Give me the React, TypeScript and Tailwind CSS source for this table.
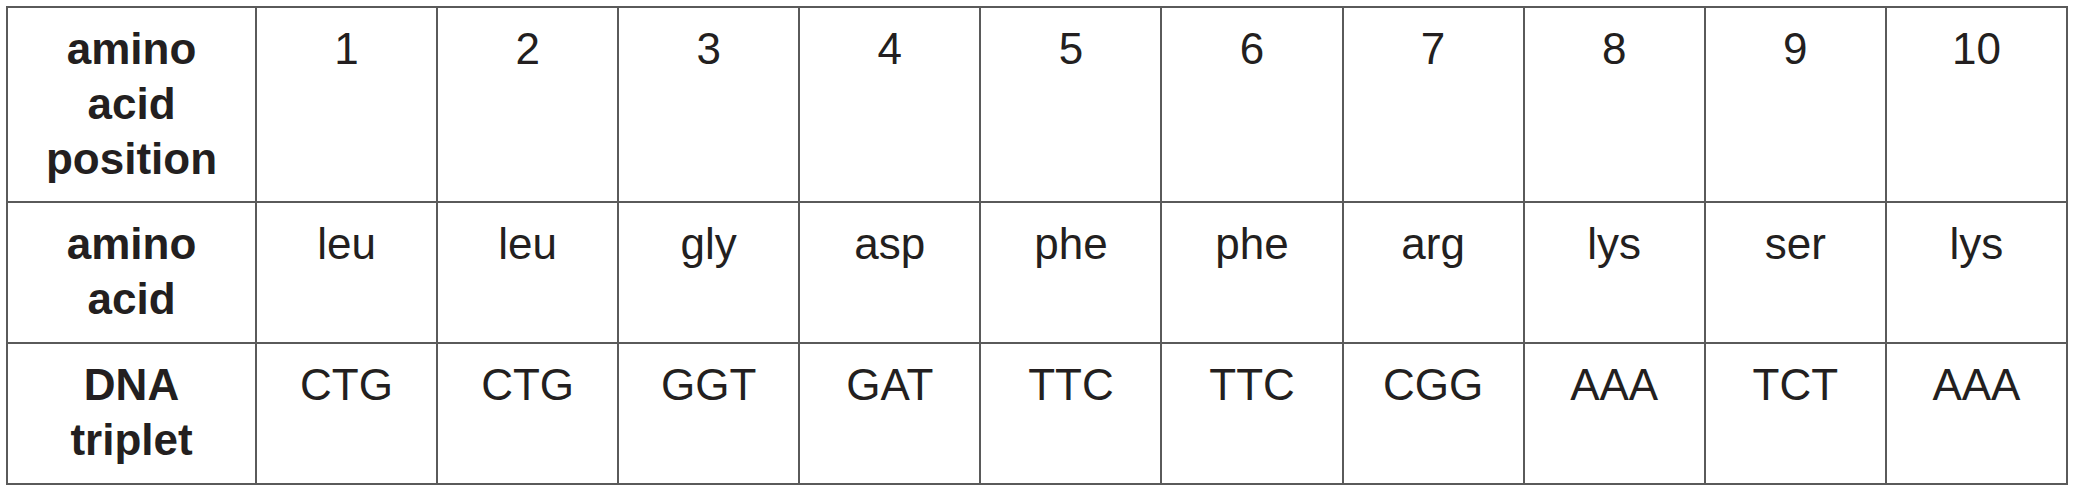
const positions = ["1", "2", "3", "4", "5", "6", "7", "8", "9", "10"];
const aminoAcids = ["leu", "leu", "gly", "asp", "phe", "phe", "arg", "lys", "ser", "lys"];
const triplets = ["CTG", "CTG", "GGT", "GAT", "TTC", "TTC", "CGG", "AAA", "TCT", "AAA"];

const rows = [
  { label: ["amino", "acid", "position"], cells: positions, height: "h-[195px]" },
  { label: ["amino", "acid"], cells: aminoAcids, height: "h-[141px]" },
  { label: ["DNA", "triplet"], cells: triplets, height: "h-[141px]" },
];

export default function App() {
  return (
    <div className="min-h-screen bg-white pl-[6px] pt-[6px] font-['Liberation_Sans',Arial,sans-serif] text-[#231f20]">
      <table className="w-[2062px] table-fixed border-collapse border-2 border-[#444]">
        <colgroup>
          <col className="w-[249px]" />
          {positions.map((p) => (
            <col key={p} />
          ))}
        </colgroup>
        <tbody>
          {rows.map((row, i) => (
            <tr key={i} className={row.height}>
              <th className="border-2 border-[#5a5a5a] pt-[13px] align-top text-[44px] leading-[55px] font-bold">
                {row.label.map((line) => (
                  <div key={line}>{line}</div>
                ))}
              </th>
              {row.cells.map((cell, j) => (
                <td
                  key={j}
                  className="border-2 border-[#5a5a5a] pt-[13px] text-center align-top text-[44px] leading-[55px]"
                >
                  {cell}
                </td>
              ))}
            </tr>
          ))}
        </tbody>
      </table>
    </div>
  );
}
